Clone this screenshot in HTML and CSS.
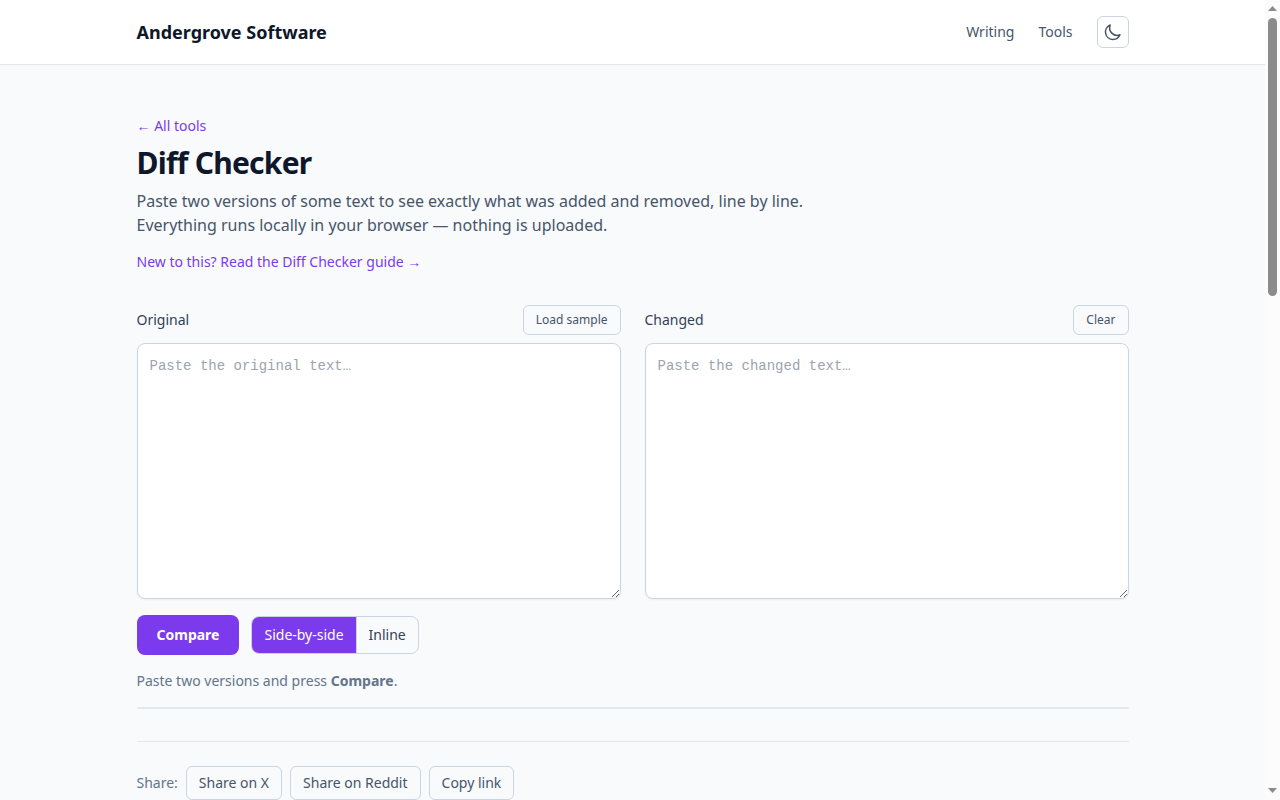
FILE: index.html
```html
<!DOCTYPE html>
<html lang="en">
<head>
<meta charset="utf-8">
<meta name="viewport" content="width=device-width, initial-scale=1">
<title>Diff Checker</title>
<link rel="stylesheet" href="styles.css">
</head>
<body>
<header class="site-header">
  <div class="container header-row">
    <a class="brand" href="#">Andergrove Software</a>
    <nav class="site-nav">
      <a href="#">Writing</a>
      <a href="#">Tools</a>
      <button class="theme-toggle" type="button" aria-label="Toggle dark mode">
        <svg viewBox="0 0 24 24" width="20" height="20" fill="none" stroke="currentColor" stroke-width="1.8" stroke-linecap="round" stroke-linejoin="round" aria-hidden="true"><path d="M20.354 15.354A9 9 0 0 1 8.646 3.646 9.003 9.003 0 0 0 12 21a9.003 9.003 0 0 0 8.354-5.646Z"/></svg>
      </button>
    </nav>
  </div>
</header>
<main class="container page">
  <div class="back"><a class="text-link" href="#">← All tools</a></div>
  <h1>Diff Checker</h1>
  <p class="intro">Paste two versions of some text to see exactly what was added and removed, line by line. Everything runs locally in your browser — nothing is uploaded.</p>
  <div class="guide"><a class="text-link" href="#">New to this? Read the Diff Checker guide →</a></div>

  <div class="editors">
    <div class="editor">
      <div class="editor-head">
        <label for="original">Original</label>
        <button class="button small" type="button">Load sample</button>
      </div>
      <textarea id="original" placeholder="Paste the original text…" spellcheck="false"></textarea>
    </div>
    <div class="editor">
      <div class="editor-head">
        <label for="changed">Changed</label>
        <button class="button small" type="button">Clear</button>
      </div>
      <textarea id="changed" placeholder="Paste the changed text…" spellcheck="false"></textarea>
    </div>
  </div>

  <div class="actions">
    <button class="compare" type="button">Compare</button>
    <div class="view-switch" role="group" aria-label="View">
      <button class="selected" type="button" aria-pressed="true">Side-by-side</button>
      <button type="button" aria-pressed="false">Inline</button>
    </div>
  </div>
  <p class="status">Paste two versions and press <strong>Compare</strong>.</p>
  <div class="result"></div>

  <div class="share">
    <span>Share:</span>
    <a class="button" href="#">Share on X</a>
    <a class="button" href="#">Share on Reddit</a>
    <button class="button" type="button">Copy link</button>
  </div>
</main>
<div class="scrollbar" aria-hidden="true">
  <svg viewBox="0 0 9 5" width="9" height="5"><path d="M4.500 0 9 5H0Z" fill="#8b8b8b"/></svg>
  <div class="track"><div class="thumb"></div></div>
  <svg viewBox="0 0 9 5" width="9" height="5"><path d="M0 0h9L4.500 5Z" fill="#8b8b8b"/></svg>
</div>
</body>
</html>
```
FILE: styles.css
```css
*,
*::before,
*::after {
  box-sizing: border-box;
}

body {
  height: 100vh;
  margin: 0;
  padding-right: 15px;
  overflow: hidden;
  background: #f8fafc;
  color: #0f172a;
  font-family: "Noto Sans", sans-serif;
  font-size: 16px;
  line-height: 24px;
}

h1,
p {
  margin: 0;
}

a {
  color: inherit;
  text-decoration: none;
}

button {
  margin: 0;
  border: 0;
  background: transparent;
  color: inherit;
  font: inherit;
  cursor: pointer;
}

.container {
  max-width: 1024px;
  margin: 0 auto;
  padding: 0 16px;
}

.site-header {
  border-bottom: 1px solid #e2e8f0;
  background: #fff;
}

.header-row {
  display: flex;
  align-items: center;
  justify-content: space-between;
  height: 64px;
}

.brand {
  font-size: 18px;
  line-height: 28px;
  font-weight: 700;
}

.site-nav {
  display: flex;
  align-items: center;
  gap: 24px;
  color: #475569;
  font-size: 14px;
  line-height: 20px;
}

.theme-toggle {
  display: grid;
  place-items: center;
  width: 32px;
  height: 32px;
  padding: 0;
  border: 1px solid #cbd5e1;
  border-radius: 6px;
}

.page {
  padding-top: 48px;
  padding-bottom: 48px;
}

.text-link {
  color: #7c3aed;
  font-size: 14px;
  line-height: 20px;
}

h1 {
  margin-top: 8px;
  font-size: 30px;
  line-height: 36px;
  font-weight: 700;
  letter-spacing: -0.025em;
}

.intro {
  max-width: 672px;
  margin-top: 8px;
  color: #475569;
}

.guide {
  margin-top: 12px;
}

.editors {
  display: grid;
  grid-template-columns: 1fr 1fr;
  gap: 24px;
  margin-top: 32px;
}

.editor-head {
  display: flex;
  align-items: center;
  justify-content: space-between;
  margin-bottom: 8px;
  color: #334155;
  font-size: 14px;
  line-height: 20px;
}

.button {
  padding: 6px 12px;
  border: 1px solid #cbd5e1;
  border-radius: 6px;
  color: #475569;
  font-size: 14px;
  line-height: 20px;
}

.button.small {
  font-size: 12px;
  line-height: 16px;
}

textarea {
  display: block;
  width: 100%;
  height: 256px;
  margin: 0;
  padding: 12px;
  border: 1px solid #cbd5e1;
  border-radius: 8px;
  background: #fff;
  box-shadow: 0 1px 2px rgb(0 0 0 / 5%);
  color: #0f172a;
  font-family: "Liberation Mono", monospace;
  font-size: 14px;
  line-height: 20px;
  resize: vertical;
}

textarea::placeholder {
  color: #9ca3af;
}

.actions {
  display: flex;
  align-items: center;
  gap: 12px;
  margin-top: 16px;
  font-size: 14px;
  line-height: 20px;
}

.compare {
  padding: 10px 20px;
  border-radius: 8px;
  background: #7c3aed;
  color: #fff;
  font-weight: 700;
}

.view-switch {
  display: flex;
  overflow: hidden;
  border: 1px solid #cbd5e1;
  border-radius: 8px;
  color: #334155;
}

.view-switch button {
  padding: 8px 12px;
}

.view-switch button + button {
  border-left: 1px solid #cbd5e1;
}

.view-switch .selected {
  background: #7c3aed;
  color: #fff;
}

.status {
  margin-top: 16px;
  color: #64748b;
  font-size: 14px;
  line-height: 20px;
}

.status strong {
  font-weight: 700;
}

.result {
  margin-top: 16px;
  border: 1px solid #e2e8f0;
  border-radius: 8px;
}

.share {
  display: flex;
  align-items: center;
  gap: 8px;
  margin-top: 32px;
  padding-top: 24px;
  border-top: 1px solid #e2e8f0;
  color: #64748b;
  font-size: 14px;
  line-height: 20px;
}

.scrollbar {
  position: fixed;
  top: 0;
  right: 0;
  bottom: 0;
  display: flex;
  flex-direction: column;
  align-items: center;
  width: 15px;
  padding: 6px 0 7px;
  background: #fcfcfc;
}

.track {
  flex: 1;
  width: 9px;
  padding: 7px 0;
}

.thumb {
  height: 36.5%;
  border-radius: 5px;
  background: #8b8b8b;
}
```
